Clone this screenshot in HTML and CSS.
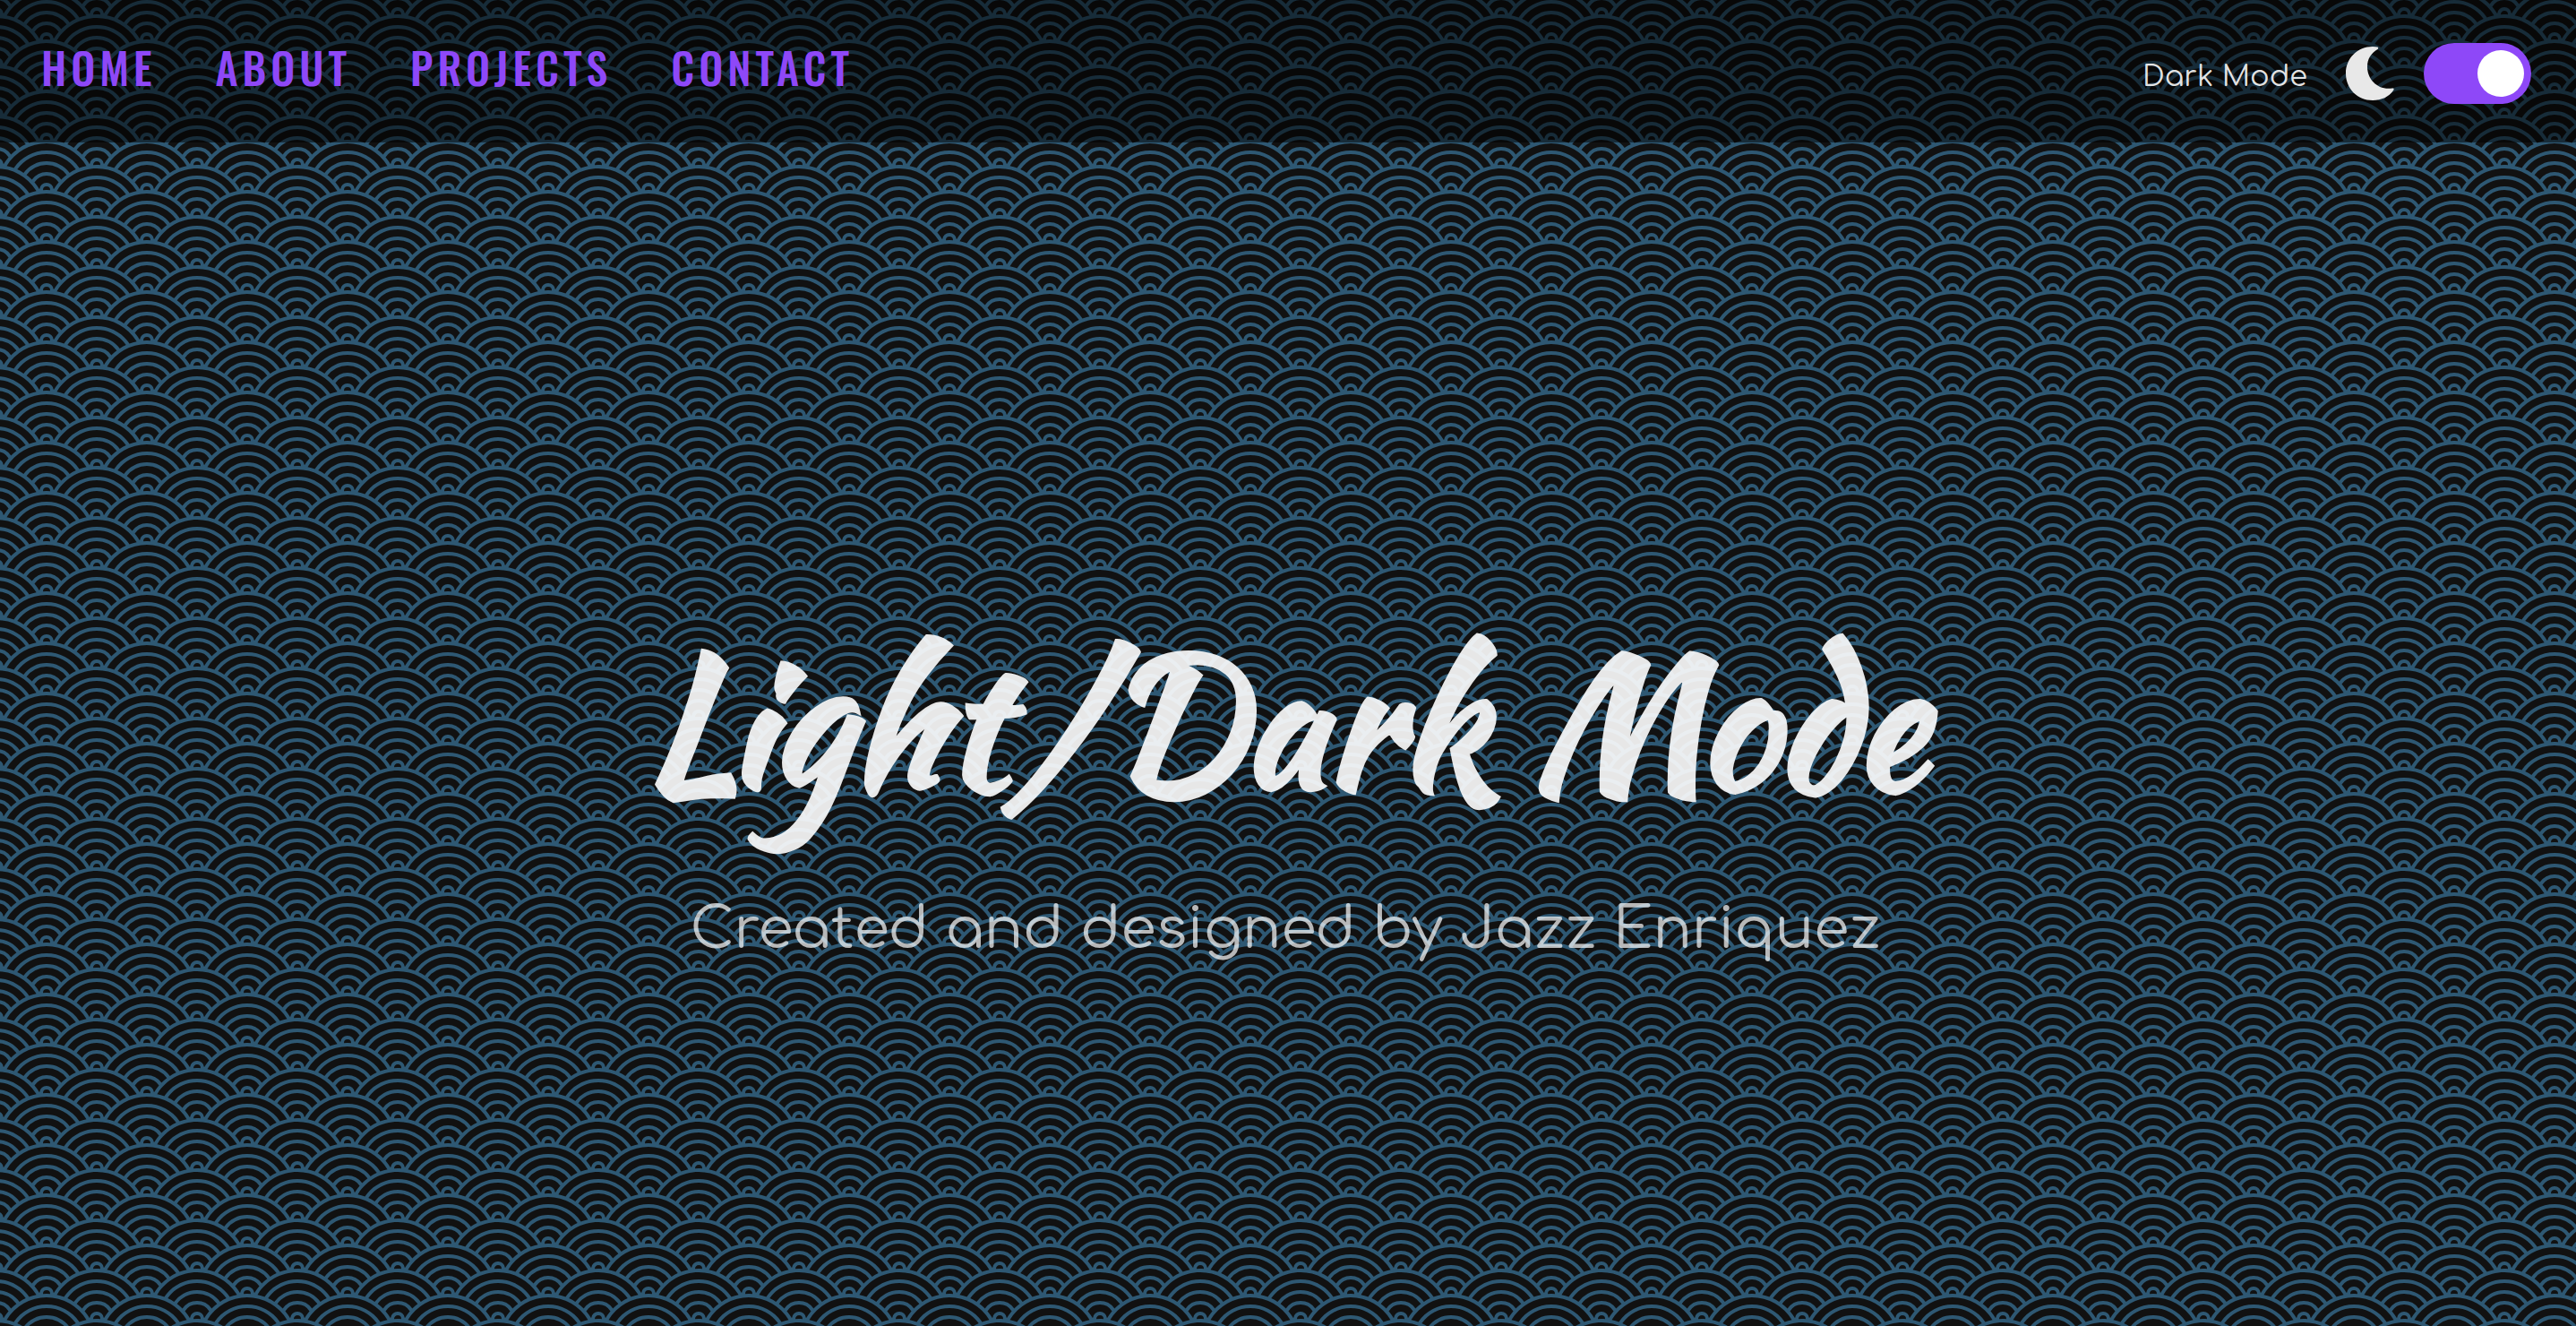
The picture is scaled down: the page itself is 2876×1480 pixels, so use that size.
FILE: index.html
```html
<!DOCTYPE html>
<html lang="en">
<head>
<meta charset="utf-8">
<meta name="viewport" content="width=device-width, initial-scale=1">
<title>Light/Dark Mode</title>
<link rel="stylesheet" href="styles.css">
</head>
<body>
<header class="header">
  <nav class="nav" aria-label="Main">
    <a href="#home">HOME</a>
    <a href="#about">ABOUT</a>
    <a href="#projects">PROJECTS</a>
    <a href="#contact">CONTACT</a>
  </nav>
  <div class="theme">
    <label class="theme-label" for="theme-switch">Dark Mode</label>
    <svg class="moon" viewBox="0 0 54 60" aria-hidden="true"><path d="M30 0C13 0 0 13 0 30s13 30 30 30c10 0 18-4 23-11 1-1 1-3-1-2.500C36 49 24 37 24 22.500 24 14 28 7.500 35.500 3c1-1 1-2 0-2.500Q33 0 30 0Z"/></svg>
    <input class="switch" id="theme-switch" type="checkbox" role="switch" checked>
  </div>
</header>
<main class="home" id="home">
  <h1 class="title">Light/Dark Mode</h1>
  <p class="subtitle">Created and designed by Jazz Enriquez</p>
</main>
</body>
</html>
```

FILE: styles.css
```css
:root {
  --primary: #8e48f8;
  --page: #111;
  --text: rgba(255, 255, 255, 0.9);
  --text-soft: rgba(255, 255, 255, 0.7);
}

* {
  box-sizing: border-box;
}

body {
  margin: 0;
  min-height: 100vh;
  display: flex;
  flex-direction: column;
  color: var(--text);
  font-family: Comfortaa, Lato, sans-serif;
  background-color: var(--page);
  background-image: url("data:image/svg+xml,%3Csvg xmlns='http://www.w3.org/2000/svg' width='112' height='56' viewBox='0 0 56 28'%3E%3Cpath fill='%232e5873' d='M56 26v2h-7.75c2.3-1.27 4.94-2 7.75-2zm-26 2a2 2 0 1 0-4 0h-4.09A25.98 25.98 0 0 0 0 16v-2c.67 0 1.34.02 2 .07V14a2 2 0 0 0-2-2v-2a4 4 0 0 1 3.98 3.6 28.09 28.09 0 0 1 2.8-3.86A8 8 0 0 0 0 6V4a9.99 9.99 0 0 1 8.17 4.23c.94-.95 1.96-1.83 3.03-2.63A13.98 13.98 0 0 0 0 0h7.75c2 1.1 3.73 2.63 5.1 4.45 1.12-.72 2.3-1.37 3.53-1.93A20.1 20.1 0 0 0 14.28 0h2.7c.45.56.88 1.14 1.29 1.74 1.3-.48 2.63-.87 4-1.15-.11-.2-.23-.4-.36-.59H26v.07a28.4 28.4 0 0 1 4 0V0h4.09l-.37.59c1.38.28 2.72.67 4.01 1.15.4-.6.84-1.18 1.3-1.74h2.69a20.1 20.1 0 0 0-2.1 2.52c1.23.56 2.41 1.2 3.54 1.93A16.08 16.08 0 0 1 48.25 0H56c-4.58 0-8.65 2.2-11.2 5.6 1.07.8 2.09 1.68 3.03 2.63A9.99 9.99 0 0 1 56 4v2a8 8 0 0 0-6.77 3.74c1.03 1.2 1.97 2.5 2.79 3.86A4 4 0 0 1 56 10v2a2 2 0 0 0-2 2.07 28.4 28.4 0 0 1 2-.07v2c-9.2 0-17.3 4.78-21.91 12H30zM7.75 28H0v-2c2.81 0 5.46.73 7.75 2zM56 20v2c-5.6 0-10.65 2.3-14.28 6h-2.7c4.04-4.89 10.15-8 16.98-8zm-39.03 8h-2.69C10.65 24.3 5.6 22 0 22v-2c6.83 0 12.94 3.11 16.97 8zm15.01-.4a28.09 28.09 0 0 1 2.8-3.86 8 8 0 0 0-13.55 0c1.03 1.2 1.97 2.5 2.79 3.86a4 4 0 0 1 7.96 0zm14.29-11.86c1.3-.48 2.63-.87 4-1.15a25.99 25.99 0 0 0-44.55 0c1.38.28 2.72.67 4.01 1.15a21.98 21.98 0 0 1 36.54 0zm-5.43 2.71c1.13-.72 2.3-1.37 3.54-1.93a19.98 19.98 0 0 0-32.76 0c1.23.56 2.41 1.2 3.54 1.93a15.98 15.98 0 0 1 25.68 0zm-4.67 3.78c.94-.95 1.96-1.83 3.03-2.63a13.98 13.98 0 0 0-22.4 0c1.07.8 2.09 1.68 3.03 2.63a9.99 9.99 0 0 1 16.34 0z'/%3E%3C/svg%3E");
  background-position: -4px -12px;
}

.header {
  display: flex;
  align-items: flex-start;
  justify-content: space-between;
  min-height: 159px;
  padding: 48px 50px 0 46px;
  background: rgba(0, 0, 0, 0.5);
}

.nav {
  display: flex;
  gap: 66px;
}

.nav a {
  color: var(--primary);
  font-family: Oswald, "Liberation Sans Narrow", "Roboto Condensed", sans-serif;
  font-size: 48px;
  font-weight: 500;
  line-height: 54px;
  letter-spacing: 5px;
  text-decoration: none;
}

.theme {
  display: flex;
  align-items: center;
}

.theme-label {
  padding-top: 8px;
  font-size: 32px;
  line-height: 60px;
}

.moon {
  width: 54px;
  height: 60px;
  margin: 0 33px 0 43px;
  fill: #e8e8e8;
}

.switch {
  appearance: none;
  display: flex;
  align-items: center;
  justify-content: flex-end;
  width: 120px;
  height: 68px;
  margin: 0;
  padding: 8px;
  border-radius: 34px;
  background: var(--primary);
  cursor: pointer;
}

.switch::before {
  content: "";
  width: 52px;
  height: 52px;
  border-radius: 50%;
  background: #fff;
}

.switch:not(:checked) {
  justify-content: flex-start;
}

.home {
  flex: 1;
  display: flex;
  flex-direction: column;
  align-items: center;
  justify-content: center;
  gap: 52px;
  padding: 94px 6px 0 0;
  text-align: center;
}

.title {
  margin: 0;
  font-family: "Kaushan Script", Lato, cursive;
  font-size: 200px;
  font-weight: 700;
  line-height: 290px;
}

.subtitle {
  margin: 0;
  color: var(--text-soft);
  font-size: 64px;
  line-height: 72px;
}
```
